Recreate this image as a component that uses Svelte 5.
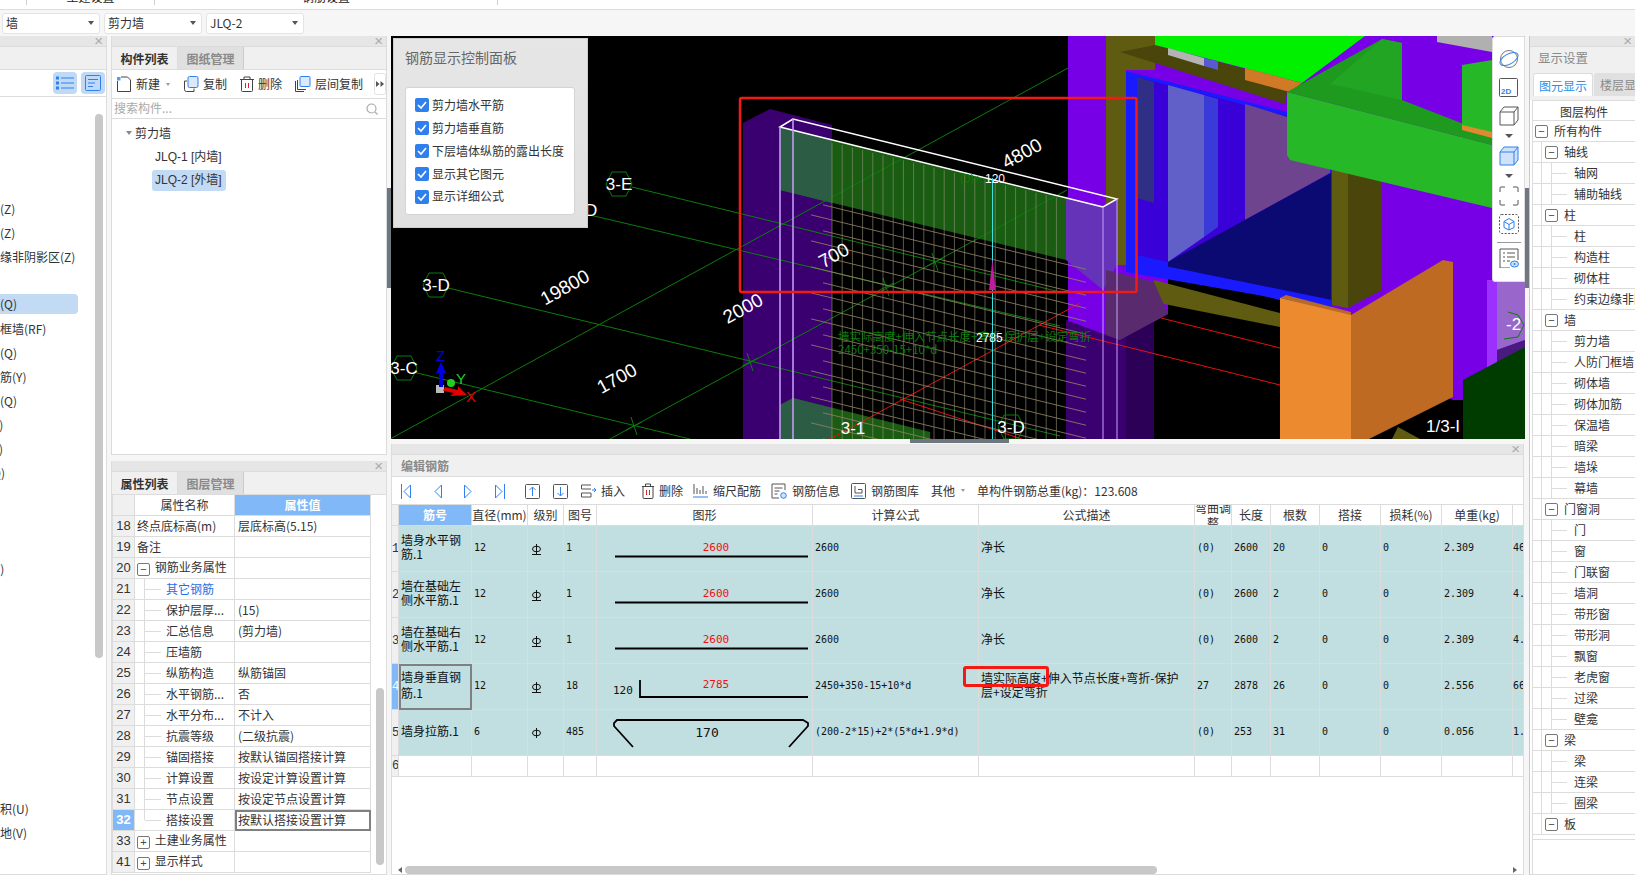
<script>
  const leftRows = ['构造柱(Z)', '砌体柱(Z)', '约束边缘非阴影区(Z)', '', '剪力墙(Q)', '人防门框墙(RF)', '砌体墙(Q)', '砌体加筋(Y)', '保温墙(Q)', '暗梁(A)', '墙垛(E)', '幕墙(Q)', '', '', '', '墙洞(D)', '壁龛(I)', '', '', '', '', '', '', '', '', '建筑面积(U)', '平整场地(V)'];

  const props = [
    { no: 18, name: '终点底标高(m)', value: '层底标高(5.15)' },
    { no: 19, name: '备注', value: '' },
    { no: 20, name: '钢筋业务属性', value: '', box: '-' },
    { no: 21, name: '其它钢筋', value: '', child: true, link: true },
    { no: 22, name: '保护层厚...', value: '(15)', child: true },
    { no: 23, name: '汇总信息', value: '(剪力墙)', child: true },
    { no: 24, name: '压墙筋', value: '', child: true },
    { no: 25, name: '纵筋构造', value: '纵筋锚固', child: true },
    { no: 26, name: '水平钢筋...', value: '否', child: true },
    { no: 27, name: '水平分布...', value: '不计入', child: true },
    { no: 28, name: '抗震等级', value: '(二级抗震)', child: true },
    { no: 29, name: '锚固搭接', value: '按默认锚固搭接计算', child: true },
    { no: 30, name: '计算设置', value: '按设定计算设置计算', child: true },
    { no: 31, name: '节点设置', value: '按设定节点设置计算', child: true },
    { no: 32, name: '搭接设置', value: '按默认搭接设置计算', child: true, last: true, active: true },
    { no: 33, name: '土建业务属性', value: '', box: '+' },
    { no: 41, name: '显示样式', value: '', box: '+' }
  ];

  const checks = ['剪力墙水平筋', '剪力墙垂直筋', '下层墙体纵筋的露出长度', '显示其它图元', '显示详细公式'];

  // rebar rows, fig: 1 straight, 18 hooked, 485 tie
  const rebars = [
    { no: 1, name: '墙身水平钢筋.1', dia: 12, grade: 'b', code: 1, fig: 'line', len: 2600, formula: '2600', desc: '净长', adj: '(0)', total: 2600, count: 20, unit: '2.309', last: '46' },
    { no: 2, name: '墙在基础左侧水平筋.1', dia: 12, grade: 'b', code: 1, fig: 'line', len: 2600, formula: '2600', desc: '净长', adj: '(0)', total: 2600, count: 2, unit: '2.309', last: '4.' },
    { no: 3, name: '墙在基础右侧水平筋.1', dia: 12, grade: 'b', code: 1, fig: 'line', len: 2600, formula: '2600', desc: '净长', adj: '(0)', total: 2600, count: 2, unit: '2.309', last: '4.' },
    { no: 4, name: '墙身垂直钢筋.1', dia: 12, grade: 'b', code: 18, fig: 'hook', len: 2785, formula: '2450+350-15+10*d', desc: '墙实际高度+伸入节点长度+弯折-保护层+设定弯折', adj: '27', total: 2878, count: 26, unit: '2.556', last: '66', active: true },
    { no: 5, name: '墙身拉筋.1', dia: 6, grade: 'a', code: 485, fig: 'tie', len: 170, formula: '(200-2*15)+2*(5*d+1.9*d)', desc: '', adj: '(0)', total: 253, count: 31, unit: '0.056', last: '1.' }
  ];

  const layerTree = [
    ['所有构件', 0], ['轴线', 1], ['轴网', 2], ['辅助轴线', 2], ['柱', 1], ['柱', 2], ['构造柱', 2], ['砌体柱', 2], ['约束边缘非阴影区', 2],
    ['墙', 1], ['剪力墙', 2], ['人防门框墙', 2], ['砌体墙', 2], ['砌体加筋', 2], ['保温墙', 2], ['暗梁', 2], ['墙垛', 2], ['幕墙', 2],
    ['门窗洞', 1], ['门', 2], ['窗', 2], ['门联窗', 2], ['墙洞', 2], ['带形窗', 2], ['带形洞', 2], ['飘窗', 2], ['老虎窗', 2], ['过梁', 2], ['壁龛', 2],
    ['梁', 1], ['梁', 2], ['连梁', 2], ['圈梁', 2], ['板', 1]
  ];

  // 3D scene, painted back to front (page coordinates)
  const solids = [
    ['1068,36 1525,36 1525,400 1453,400 1280,300 1168,262 1168,314 1120,340 1068,340', '#7800e6'],
    ['1066,320 1120,340 1154,322 1154,439 1066,439', '#3a0070'],
    ['1126,332 1154,322 1154,439 1126,439', '#2c0056'],
    ['1106,36 1126,36 1126,265 1106,265', '#5f5c12'],
    ['1126,36 1155,36 1155,70 1126,70', '#5f5c12'],
    ['1120,52 1155,45 1305,85 1287,92 1285,104', '#4a450a'],
    ['1155,36 1365,36 1302,83 1155,45', '#00f000'],
    ['1168,48 1204,58 1204,66 1168,55', '#b4b4b4'],
    ['1204,58 1218,61 1218,70 1204,66', '#5a5ad0'],
    ['1245,68 1302,83 1290,92 1245,80', '#d07a28'],
    ['1437,36 1492,36 1492,52 1437,42', '#b0b0b0'],
    ['1126,71 1287,112 1332,160 1332,305 1280,300 1126,263', '#1a1aff'],
    ['1137,77 1287,116 1330,160 1330,300 1137,255', '#3a00d8'],
    ['1137,77 1154,82 1154,203 1137,198', '#2f2f85'],
    ['1168,85 1204,95 1204,237 1168,262', '#6060c8'],
    ['1204,95 1218,99 1218,227 1204,237', '#3a3ad8'],
    ['1245,104 1330,130 1330,173 1245,220', '#6f448f'],
    ['1168,262 1331,173 1331,303 1168,270', '#0a0a72'],
    ['1126,258 1332,300 1332,308 1126,272', '#1a1aff'],
    ['1154,280 1280,313 1280,327 1154,302', '#5f5c12'],
    ['1332,170 1348,172 1348,308 1332,305', '#5f5c12'],
    ['1348,172 1382,180 1382,290 1348,308', '#4a450a'],
    ['1287,92 1382,39 1402,43 1402,100 1492,135 1492,145', '#1e9a1e'],
    ['1382,39 1402,43 1402,100 1330,84', '#22a522'],
    ['1287,92 1492,145 1492,208 1290,160 1287,155', '#27b827'],
    ['1462,65 1492,60 1492,135 1462,128', '#27b827'],
    ['1462,125 1492,132 1492,138 1462,130', '#e08a30'],
    ['1280,298 1286,295 1351,312 1351,316', '#b56a25'],
    ['1280,298 1351,315 1351,439 1280,439', '#ec8a30'],
    ['1351,315 1443,260 1453,262 1453,397 1369,439 1351,439', '#bf6a23'],
    ['1487,280 1497,280 1497,400 1487,404', '#9b30ff'],
    ['1497,280 1525,280 1525,340 1497,350', '#9966cc'],
    ['1497,350 1525,340 1525,385 1497,400', '#4b1a80'],
    ['1463,380 1525,347 1525,439 1463,439', '#003c00'],
    ['1398,427 1420,439 1392,439', '#5f5c12'],
    // shear wall and the column behind it
    ['743,123 770,109 832,125 832,439 743,439', '#3a0070'],
    ['780,127 1066,198 1066,260 780,190', '#1a5c12'],
    ['780,127 832,140 832,203 780,190', '#2d5c45'],
    ['1066,198 1103,207 1117,199 1117,265 1103,290 1066,260', '#6433b8'],
    ['1106,270 1154,282 1168,314 1120,340 1106,335', '#5a2a6e'],
    ['780,405 793,398 930,432 930,439 780,439', '#1a5c12'],
    ['780,405 793,398 832,408 832,439 780,439', '#2d5c45']
  ];

  const greenLines = [
    [632, 187, 1060, 292], [590, 215, 1060, 326], [448, 288, 1060, 436], [413, 372, 690, 439],
    [390, 439, 1068, 68], [610, 439, 1067, 190]
  ];
  const redLines = [
    [900, 399, 1022, 439], [830, 439, 1080, 303], [1039, 325, 1280, 385], [1161, 318, 1280, 348]
  ];
  const ticks = [[634, 426], [750, 362], [886, 287], [935, 262]];
  const dims = [
    ['19800', 568, 293], ['2000', 746, 314], ['1700', 620, 384], ['700', 837, 261], ['4800', 1025, 159]
  ];
  const hexes = [[619, 184, '3-E'], [436, 285, '3-D'], [404, 368, '3-C'], [1011, 427, '3-D']];

  const barH = Array.from({ length: 19 }, (_, i) => {
    const y = 207 + i * 13;
    const x1 = i % 2 ? 811 : 823;
    return { x1, y1: y + 0.245 * (x1 - 832), x2: 1086, y2: y + 0.245 * (1086 - 832) };
  });
  const barV = Array.from({ length: 23 }, (_, i) => 832 + i * 10.2);
</script>

<div class="app">
  <div class="menu">
    <span class="menu-tab first"><span>土建设置</span></span>
    <span class="menu-tab second"><span>钢筋设置</span></span>
  </div>

  <div class="pickers">
    <div class="picker">墙<i></i></div>
    <div class="picker">剪力墙<i></i></div>
    <div class="picker">JLQ-2<i></i></div>
  </div>

  <div class="main">
    <!-- nav panel, mostly scrolled off to the left -->
    <section class="panel nav">
      <div class="bar"><span class="close">×</span></div>
      <div class="nav-blank"></div>
      <div class="nav-tools">
        <button class="view-btn" aria-label="list">
          <svg width="18" height="14" viewBox="0 0 18 14" fill="none" stroke="#2f80ed"><rect x=".5" y="1" width="2" height="2" /><rect x=".5" y="6" width="2" height="2" /><rect x=".5" y="11" width="2" height="2" /><path d="M5 2h13M5 7h13M5 12h13" /></svg>
        </button>
        <button class="view-btn" aria-label="detail">
          <svg width="16" height="16" viewBox="0 0 16 16" fill="none" stroke="#2f80ed"><rect x=".5" y=".5" width="15" height="15" rx="1" /><path d="M3 4.500h10M3 8h7M3 11.500h5" /></svg>
        </button>
      </div>
      <div class="nav-list">
        {#each leftRows as row, i}
          <div class="nav-row" class:picked={i === 4}><span>{row}</span></div>
        {/each}
        <div class="nav-scroll"></div>
      </div>
    </section>

    <div class="mid">
      <section class="panel upper">
        <div class="bar"><span class="close">×</span></div>
        <div class="tabs">
          <span class="tab on">构件列表</span>
          <span class="tab">图纸管理</span>
        </div>
        <div class="tools list-tools">
          <span class="tool">
            <svg width="16" height="16" viewBox="0 0 16 16" fill="none" stroke="#444"><path d="M1.500 5v10.500h13V4l-3-3H5" /><rect x="1" y="1" width="3.500" height="3.500" fill="#5b9bea" stroke="none" /></svg>
            新建<i class="caret"></i>
          </span>
          <span class="tool">
            <svg width="16" height="16" viewBox="0 0 16 16" fill="none"><path d="M4 5H1.500v8.500a2 2 0 0 0 2 2H11v-3" stroke="#444" /><rect x="5" y=".5" width="10" height="11" rx="1.500" fill="#dbe9fb" stroke="#2f80ed" /></svg>
            复制
          </span>
          <span class="tool">
            <svg width="14" height="16" viewBox="0 0 14 16" fill="none" stroke="#444"><path d="M0 3.500h14M4 3.500V1h6v2.500M1.500 3.500v11a1 1 0 0 0 1 1h9a1 1 0 0 0 1-1v-11" /><path d="M5.500 7v5M8.500 7v5" stroke="#e02020" /></svg>
            删除
          </span>
          <span class="tool">
            <svg width="16" height="16" viewBox="0 0 16 16" fill="none"><path d="M.5 5v10.500H9M2.500 4v9.500H11" stroke="#444" /><rect x="5" y=".5" width="10" height="10" rx="1" fill="#dbe9fb" stroke="#2f80ed" /></svg>
            层间复制
          </span>
          <span class="more">
            <svg width="8" height="6" viewBox="0 0 8 6" fill="#555"><path d="M0 0l3.500 3L0 6zM4.500 0L8 3 4.500 6z" /></svg>
          </span>
        </div>
        <div class="search">
          <span>搜索构件...</span>
          <svg width="12" height="12" viewBox="0 0 12 12" fill="none" stroke="#aaa" stroke-width="1.200"><circle cx="5.500" cy="5.500" r="4.500" /><path d="M9 9l2.500 2.500" /></svg>
        </div>
        <div class="tree">
          <div class="tree-root"><i></i>剪力墙</div>
          <div class="tree-leaf">JLQ-1 [内墙]</div>
          <div class="tree-leaf picked">JLQ-2 [外墙]</div>
        </div>
      </section>

      <section class="panel lower-left">
        <div class="bar"><span class="close">×</span></div>
        <div class="tabs">
          <span class="tab on">属性列表</span>
          <span class="tab">图层管理</span>
        </div>
        <div class="prop-wrap">
          <table class="props">
            <colgroup><col style="width:22px" /><col style="width:100px" /><col style="width:136px" /></colgroup>
            <thead>
              <tr><th class="no"></th><th>属性名称</th><th class="hot">属性值</th></tr>
            </thead>
            <tbody>
              {#each props as p}
                <tr>
                  <td class="no" class:hot={p.active}>{p.no}</td>
                  <td class="pname" class:child={p.child}>
                    {#if p.child}
                      <i class="elbow" class:end={p.last}></i>
                    {/if}
                    {#if p.box}
                      <span class="box">{p.box === '-' ? '−' : '+'}</span>
                    {/if}
                    <span class:link={p.link}>{p.name}</span>
                  </td>
                  <td class="pval" class:active={p.active}>{p.value}</td>
                </tr>
              {/each}
            </tbody>
          </table>
          <div class="prop-scroll"></div>
        </div>
      </section>
    </div>

    <div class="gutter"><i></i></div>

    <div class="center">
      <div class="viewport">
        <svg class="scene" width="1134" height="403" viewBox="391 36 1134 403">
          {#each solids as s}
            <polygon points={s[0]} fill={s[1]} />
          {/each}

          {#each greenLines as l}
            <line x1={l[0]} y1={l[1]} x2={l[2]} y2={l[3]} stroke="#0b7d0b" />
          {/each}
          {#each ticks as t}
            <path d="M{t[0] - 3} {t[1] - 9}L{t[0] + 3} {t[1] + 9}M{t[0] - 8} {t[1] + 4}L{t[0] + 8} {t[1] - 4}" stroke="#0b7d0b" fill="none" />
          {/each}
          {#each redLines as l}
            <line x1={l[0]} y1={l[1]} x2={l[2]} y2={l[3]} stroke="#e80f0f" />
          {/each}

          {#each barV as x}
            <line x1={x} y1={130 + 0.245 * (x - 780)} x2={x} y2="439" stroke="#94947c" stroke-opacity=".6" />
          {/each}
          {#each barH as b}
            <line x1={b.x1} y1={b.y1} x2={b.x2} y2={b.y2} stroke="#8f8060" stroke-opacity=".85" />
          {/each}

          <path d="M780 127L793 119L1117 199L1103 207ZM780 127L1103 207" fill="none" stroke="#fff" stroke-width="1.500" />
          <path d="M780 127V439M793 119V439" stroke="#c9a0ff" stroke-width="1.500" fill="none" />
          <path d="M1103 207V439M1117 199V439" stroke="#c9a0ff" fill="none" />
          <line x1="992.500" y1="178" x2="992.500" y2="439" stroke="#3fe0e0" />
          <polygon points="992.500,259 989,290 995.500,290" fill="#c01ca0" />

          <!-- grid bubbles -->
          {#each hexes as h}
            <polygon points="{h[0] - 13},{h[1]} {h[0] - 7},{h[1] - 12} {h[0] + 7},{h[1] - 12} {h[0] + 13},{h[1]} {h[0] + 7},{h[1] + 12} {h[0] - 7},{h[1] + 12}" fill="none" stroke="#0b7d0b" />
            <text class="label" x={h[0]} y={h[1] + 6} text-anchor="middle">{h[2]}</text>
          {/each}
          <text class="label" x="585" y="216">D</text>
          <text class="label" x="853" y="434" text-anchor="middle">3-1</text>
          <text class="label" x="1426" y="432">1/3-I</text>
          <text class="label" x="1506" y="330">-2</text>
          <path d="M1508 312l10 3 6 10-6 12-14 2" fill="none" stroke="#0b7d0b" />

          {#each dims as d}
            <text class="dim" x={d[1]} y={d[2]} text-anchor="middle" transform="rotate(-29 {d[1]} {d[2]})">{d[0]}</text>
          {/each}

          <text class="green" x="838" y="341">墙实际高度+伸入节点长度+弯折-保护层+设定弯折</text>
          <text class="green" x="838" y="354">2450+350-15+10*d</text>
          <text class="small" x="976" y="342">2785</text>
          <text class="green" x="960" y="183">(0)+</text>
          <text class="small" x="985" y="183">120</text>

          <!-- axis gizmo -->
          <rect x="436" y="385" width="8" height="8" fill="#bbb" />
          <path d="M441 387V372" stroke="#0000e0" stroke-width="4" />
          <polygon points="441,362 436,373 446,373" fill="#0000e0" />
          <polygon points="445,387 458,390 458,386 467,395 450,396 454,393 443,391" fill="#e00000" />
          <circle cx="451" cy="383" r="4" fill="#22d022" />
          <text class="axis" x="436" y="361" fill="#0000e0">Z</text>
          <text class="axis" x="456" y="384" fill="#22d022">Y</text>
          <text class="axis" x="466" y="402" fill="#e00000">X</text>

          <rect x="740" y="98" width="396.500" height="194" rx="1.500" fill="none" stroke="#f41a14" stroke-width="2.500" />
        </svg>

        <div class="rebar-panel">
          <h4>钢筋显示控制面板</h4>
          <div class="rebar-checks">
            {#each checks as label}
              <label>
                <svg width="14" height="14" viewBox="0 0 14 14"><rect width="14" height="14" rx="2" fill="#2f80ed" /><path d="M3 7l3 3 5-6" fill="none" stroke="#fff" stroke-width="1.600" /></svg>
                {label}
              </label>
            {/each}
          </div>
        </div>

        <div class="view-tools">
          <svg width="20" height="20" viewBox="0 0 20 20" fill="none"><circle cx="10" cy="10" r="8.500" stroke="#777" /><ellipse cx="10" cy="10" rx="10" ry="5" transform="rotate(-30 10 10)" stroke="#2f80ed" /></svg>
          <svg class="two-d-box" width="19" height="19" viewBox="0 0 19 19" fill="none"><rect x=".5" y=".5" width="18" height="18" rx="1" stroke="#555" /><text x="2" y="16" class="two-d">2D</text></svg>
          <svg width="20" height="20" viewBox="0 0 20 20" fill="none" stroke="#555"><path d="M1 6l4-5h14v13l-4 5H1zM1 6h14v13M15 6l4-5" /></svg>
          <i class="tool-caret"></i>
          <svg width="20" height="20" viewBox="0 0 20 20" stroke="#2f80ed"><path d="M1 6l4-5h14v13l-4 5H1z" fill="#cfe2fa" /><path d="M1 6h14v13M15 6l4-5" fill="none" /></svg>
          <i class="tool-caret"></i>
          <svg width="20" height="20" viewBox="0 0 20 20" fill="none" stroke="#555"><path d="M1 6V2a1 1 0 0 1 1-1h4M14 1h4a1 1 0 0 1 1 1v4M19 14v4a1 1 0 0 1-1 1h-4M6 19H2a1 1 0 0 1-1-1v-4" /></svg>
          <svg width="20" height="20" viewBox="0 0 20 20" fill="none"><rect x=".5" y=".5" width="19" height="19" rx="2" stroke="#555" stroke-dasharray="2 1.500" /><path d="M10 4.500l5 3v6l-5 2.500-5-2.500v-6zM5 7.500l5 3 5-3M10 10.500V16" stroke="#2f80ed" /></svg>
          <div class="tool-line"></div>
          <svg width="20" height="20" viewBox="0 0 20 20" fill="none"><path d="M19 12V1H1v19h10" stroke="#555" /><path d="M4 5h2M8 5h8M4 9h2M8 9h8M4 13h2M8 13h3" stroke="#555" /><ellipse cx="15.500" cy="16" rx="4" ry="3" fill="#cfe2fa" stroke="#2f80ed" /><circle cx="15.500" cy="16" r="1" fill="#2f80ed" /></svg>
        </div>
      </div>

      <div class="hgutter"><i></i></div>

      <section class="panel editor">
        <div class="bar"><span class="close">×</span></div>
        <div class="editor-title">编辑钢筋</div>
        <div class="tools editor-tools">
          <span class="nav-btns">
            <svg width="10" height="15" viewBox="0 0 10 15" fill="none" stroke="#2f80ed"><path d="M.5 0v15M9.500 1L3 7.500 9.500 14z" /></svg>
            <svg width="8" height="15" viewBox="0 0 8 15" fill="none" stroke="#2f80ed"><path d="M7.500 1L1 7.500 7.500 14z" /></svg>
            <svg width="8" height="15" viewBox="0 0 8 15" fill="none" stroke="#2f80ed"><path d="M.5 1L7 7.500.5 14z" /></svg>
            <svg width="10" height="15" viewBox="0 0 10 15" fill="none" stroke="#2f80ed"><path d="M9.500 0v15M.5 1L7 7.500.5 14z" /></svg>
          </span>
          <span class="move-btns">
            <svg width="15" height="15" viewBox="0 0 15 15" fill="none"><rect x=".5" y=".5" width="14" height="14" rx="1" stroke="#555" /><path d="M7.500 12V3.500M4.500 6l3-3 3 3" stroke="#2f80ed" /></svg>
            <svg width="15" height="15" viewBox="0 0 15 15" fill="none"><rect x=".5" y=".5" width="14" height="14" rx="1" stroke="#555" /><path d="M7.500 3v8.500M4.500 9l3 3 3-3" stroke="#2f80ed" /></svg>
          </span>
          <span class="tool">
            <svg width="15" height="14" viewBox="0 0 15 14" fill="none"><path d="M10 1H.5v4H10M.5 9h9.500v4H.5z" stroke="#555" /><path d="M11 6h3.500M13 4l2 2-2 2" stroke="#2f80ed" /></svg>
            插入
          </span>
          <span class="tool">
            <svg width="12" height="16" viewBox="0 0 12 16" fill="none" stroke="#444"><path d="M0 3.500h12M3.500 3.500V1h5v2.500M1 3.500v11a1 1 0 0 0 1 1h8a1 1 0 0 0 1-1v-11" /><path d="M4.500 7v5M7.500 7v5" stroke="#e02020" /></svg>
            删除
          </span>
          <span class="tool">
            <svg width="15" height="16" viewBox="0 0 15 16" fill="none"><path d="M1 1v10M4 5v6M7 7v4M10 3v8M13 8v3" stroke="#555" /><path d="M0 14h15" stroke="#2f80ed" /></svg>
            缩尺配筋
          </span>
          <span class="tool">
            <svg width="16" height="16" viewBox="0 0 16 16" fill="none"><path d="M14 7V1H1v14h7" stroke="#555" /><path d="M3.500 5h8M3.500 8h5M3.500 11h3" stroke="#555" /><circle cx="12.500" cy="12.500" r="2.800" fill="#cfe2fa" stroke="#2f80ed" /></svg>
            钢筋信息
          </span>
          <span class="tool">
            <svg width="15" height="16" viewBox="0 0 15 16" fill="none" stroke="#555"><rect x=".5" y=".5" width="14" height="15" rx="1" /><path d="M4 3v7h7V6.500H7" /><path d="M3 13h9" stroke="#2f80ed" /></svg>
            钢筋图库
          </span>
          <span class="tool">其他<i class="caret"></i></span>
          <span class="total">单构件钢筋总重(kg)：123.608</span>
        </div>

        <div class="grid-wrap">
          <table class="rebars">
            <colgroup>
              <col style="width:7px" /><col style="width:73px" /><col style="width:56px" /><col style="width:36px" /><col style="width:33px" />
              <col style="width:216px" /><col style="width:166px" /><col style="width:216px" /><col style="width:37px" /><col style="width:39px" />
              <col style="width:49px" /><col style="width:61px" /><col style="width:61px" /><col style="width:71px" /><col style="width:12px" />
            </colgroup>
            <thead>
              <tr>
                <th class="idx"></th><th class="hot">筋号</th><th>直径(mm)</th><th>级别</th><th>图号</th><th>图形</th><th>计算公式</th><th>公式描述</th>
                <th><div class="clip">弯曲调整</div></th><th>长度</th><th>根数</th><th>搭接</th><th>损耗(%)</th><th>单重(kg)</th><th></th>
              </tr>
            </thead>
            <tbody>
              {#each rebars as r}
                <tr class="filled">
                  <td class="idx" class:hot={r.active}>{r.no}</td>
                  <td class="rname" class:active={r.active}>{r.name}</td>
                  <td class="num">{r.dia}</td>
                  <td class="grade">
                    <svg width="11" height="11" viewBox="0 0 11 11" fill="none" stroke="#111"><ellipse cx="5.500" cy="5" rx="4" ry="2.800" /><path d="M5.500 0v10" />{#if r.grade === 'b'}<path d="M1 10.500h9" />{/if}</svg>
                  </td>
                  <td class="num">{r.code}</td>
                  <td class="fig">
                    <svg width="216" height="45" viewBox="0 0 216 45">
                      {#if r.fig === 'line'}
                        <line x1="18" y1="30.500" x2="211" y2="30.500" stroke="#000" stroke-width="2" />
                        <text class="fig-red" x="119" y="25" text-anchor="middle">{r.len}</text>
                      {:else if r.fig === 'hook'}
                        <path d="M43 16V33H211" fill="none" stroke="#000" stroke-width="1.800" />
                        <text class="fig-black" x="16" y="30">120</text>
                        <text class="fig-red" x="119" y="24" text-anchor="middle">{r.len}</text>
                      {:else}
                        <path d="M36 37L17 16V13L20 10H206L211 13V16L192 37" fill="none" stroke="#000" stroke-width="1.800" />
                        <text class="fig-black big" x="110" y="27" text-anchor="middle">{r.len}</text>
                      {/if}
                    </svg>
                  </td>
                  <td class="num">{r.formula}</td>
                  <td class="desc">
                    {r.desc}
                    {#if r.active}<span class="callout"></span>{/if}
                  </td>
                  <td class="num">{r.adj}</td>
                  <td class="num">{r.total}</td>
                  <td class="num">{r.count}</td>
                  <td class="num">0</td>
                  <td class="num">0</td>
                  <td class="num">{r.unit}</td>
                  <td class="num edge">{r.last}</td>
                </tr>
              {/each}
              <tr class="blank">
                <td class="idx">6</td><td></td><td></td><td></td><td></td><td></td><td></td><td></td><td></td><td></td><td></td><td></td><td></td><td></td><td></td>
              </tr>
            </tbody>
          </table>
          <div class="hscroll">
            <i class="arrow left"></i>
            <div class="thumb"></div>
            <i class="arrow right"></i>
          </div>
        </div>
      </section>
    </div>

    <div class="gutter"><i></i></div>

    <section class="panel layers">
      <div class="bar"><span class="close">×</span></div>
      <div class="layers-title">显示设置</div>
      <div class="layers-tabs">
        <span class="ltab on">图元显示</span>
        <span class="ltab">楼层显示</span>
      </div>
      <div class="layer-table">
        <div class="layer-head">图层构件</div>
        {#each layerTree as [name, level]}
          <div class="layer-row lv{level}">
            {#if level > 0}<i class="rail r1"></i>{/if}
            {#if level === 2}<i class="rail r2"></i><i class="dash"></i>{/if}
            {#if level < 2}<span class="box">−</span>{/if}
            <span class="layer-name">{name}</span>
          </div>
        {/each}
        <div class="layer-end"></div>
      </div>
    </section>
  </div>
</div>

<style>
  :global(body) {
    margin: 0;
    overflow: hidden;
  }

  .app {
    width: 1635px;
    height: 875px;
    overflow: hidden;
    background: #f6f6f6;
    color: #333;
    font: 12px/1.2 "Noto Sans CJK SC", "Liberation Sans", sans-serif;
  }

  .menu {
    height: 9px;
    padding-left: 26px;
    display: flex;
    overflow: hidden;
    background: #fff;
    border-bottom: 1px solid #dcdcdc;
  }

  .menu-tab {
    display: flex;
    justify-content: center;
    height: 5px;
    border-left: 1px solid #d0d0d0;
    color: #222;
  }

  .menu-tab span {
    margin-top: -12px;
    line-height: 18px;
    height: 15px;
    overflow: hidden;
  }

  .menu-tab.first { width: 127px; }
  .menu-tab.second { width: 342px; border-right: 1px solid #d0d0d0; }

  .pickers {
    height: 26px;
    padding-left: 2px;
    display: flex;
    align-items: center;
    gap: 4px;
    box-sizing: border-box;
  }

  .picker {
    width: 98px;
    height: 21px;
    padding-left: 3px;
    box-sizing: border-box;
    display: flex;
    align-items: center;
    justify-content: space-between;
    background: #fff;
    border: 1px solid #e4e4e4;
    border-radius: 3px;
  }

  .picker i {
    margin-right: 5px;
    border: 3px solid transparent;
    border-top: 4px solid #555;
    border-bottom: 0;
  }

  .main {
    height: 839px;
    display: grid;
    grid-template-columns: 107px 4px 276px 4px 1134px 4px 106px;
  }

  .mid { grid-column: 3; display: flex; flex-direction: column; gap: 6px; }
  .center { display: flex; flex-direction: column; }

  .panel {
    background: #fff;
    box-sizing: border-box;
    border: 1px solid #dcdcdc;
    border-top: 0;
    overflow: hidden;
    display: flex;
    flex-direction: column;
    min-height: 0;
  }

  .bar {
    flex: none;
    height: 10px;
    background: #e6e6e6;
    border-bottom: 1px solid #dcdcdc;
    position: relative;
  }

  .close {
    position: absolute;
    right: 3px;
    top: -4px;
    color: #aaa;
    font: 15px/18px "Liberation Sans", sans-serif;
  }

  /* left nav */
  .nav { border-left: 0; }
  .nav-blank { height: 22px; background: #f0f0f0; border-bottom: 1px solid #dcdcdc; flex: none; }

  .nav-tools {
    height: 26px;
    flex: none;
    display: flex;
    justify-content: flex-end;
    align-items: center;
    gap: 4px;
    padding-right: 1px;
    border-bottom: 1px solid #dcdcdc;
  }

  .view-btn {
    width: 24px;
    height: 22px;
    padding: 0;
    border: 0;
    border-radius: 4px;
    background: #bfd9f6;
    display: flex;
    align-items: center;
    justify-content: center;
  }

  .nav-list {
    flex: 1;
    position: relative;
    padding-top: 100px;
  }

  .nav-row {
    height: 24px;
    display: flex;
    align-items: center;
    white-space: nowrap;
  }

  .nav-row span { margin-left: -36px; }

  .nav-row.picked {
    width: 78px;
    height: 20px;
    margin: 1px 0 3px;
    background: #c2daf3;
    border-radius: 0 4px 4px 0;
  }

  .nav-scroll {
    position: absolute;
    top: 17px;
    left: 95px;
    width: 8px;
    height: 544px;
    background: #c8c8c8;
    border-radius: 4px;
  }

  /* component list */
  .upper { height: 419px; flex: none; }
  .lower-left { flex: 1; }

  .tabs {
    flex: none;
    height: 23px;
    display: flex;
    background: #f0f0f0;
    border-bottom: 1px solid #dcdcdc;
    box-sizing: border-box;
  }

  .tab {
    width: 65px;
    text-align: center;
    line-height: 23px;
    color: #8a8a8a;
    font-weight: 700;
    background: #e0e0e0;
    border-right: 1px solid #ccc;
  }

  .tab.on {
    color: #333;
    background: #f0f0f0;
    border-right: 1px solid #dcdcdc;
  }

  .tools {
    flex: none;
    display: flex;
    align-items: center;
    border-bottom: 1px solid #dcdcdc;
    white-space: nowrap;
  }

  .tool {
    display: inline-flex;
    align-items: center;
    gap: 5px;
  }

  .list-tools {
    height: 28px;
    padding-left: 4px;
    gap: 13px;
  }

  .list-tools .tool { gap: 4px; }

  .caret {
    width: 0;
    margin-left: 2px;
    border: 2.500px solid transparent;
    border-top: 3px solid #999;
    border-bottom: 0;
  }

  .more {
    height: 20px;
    width: 10px;
    margin-left: -2px;
    display: flex;
    align-items: center;
    justify-content: center;
    border: 1px solid #e4e4e4;
    border-radius: 2px;
  }

  .search {
    flex: none;
    height: 19px;
    padding: 0 8px 0 2px;
    display: flex;
    align-items: center;
    justify-content: space-between;
    color: #aaa;
    border-bottom: 1px solid #dcdcdc;
  }

  .tree { flex: 1; padding-top: 2px; }

  .tree-root {
    height: 24px;
    padding-left: 14px;
    display: flex;
    align-items: center;
    gap: 3px;
  }

  .tree-root i {
    border: 3.500px solid transparent;
    border-top: 4px solid #888;
    border-bottom: 0;
  }

  .tree-leaf {
    width: fit-content;
    height: 21px;
    margin: 2px 0 0 40px;
    padding: 0 4px 0 3px;
    line-height: 21px;
    font-family: "Liberation Sans", "Noto Sans CJK SC", sans-serif;
    border-radius: 3px;
  }

  .tree-leaf.picked { background: #c2daf3; }

  /* property table */
  .prop-wrap { flex: 1; position: relative; }

  .props {
    width: 258px;
    table-layout: fixed;
    border-collapse: collapse;
  }

  .props th {
    height: 20px;
    padding: 0;
    font-weight: 400;
    border: 1px solid #dcdcdc;
    border-top: 0;
  }

  .props td {
    height: 20px;
    padding: 0 3px;
    box-sizing: content-box;
    border: 1px solid #dcdcdc;
    white-space: nowrap;
    overflow: hidden;
  }

  .props .no {
    padding: 0;
    text-align: center;
    background: #f0f0f0;
    font-family: "Liberation Sans", sans-serif;
    font-size: 13px;
  }

  .props .hot, .rebars .hot {
    background: #80b8f8;
    color: #fff;
    font-weight: 700;
  }

  .props td.pname {
    position: relative;
    padding-left: 2px;
  }

  .props td.pname.child { padding-left: 31px; }

  .link { color: #1f6fe5; }

  .box {
    display: inline-block;
    width: 11px;
    height: 11px;
    margin-right: 2px;
    border: 1px solid #777;
    border-radius: 2px;
    text-align: center;
    vertical-align: -1px;
    background: #fff;
    font: 11px/10px "Liberation Sans", sans-serif;
    color: #444;
  }

  .elbow {
    position: absolute;
    left: 9px;
    top: -1px;
    bottom: -1px;
    width: 16px;
    border-left: 1px solid #dcdcdc;
  }

  .elbow::after {
    content: "";
    position: absolute;
    left: 0;
    right: 0;
    top: 11px;
    border-top: 1px solid #dcdcdc;
  }

  .elbow.end { bottom: 10px; }

  .pval.active {
    outline: 2px solid #808080;
    outline-offset: -2px;
  }

  .prop-scroll {
    position: absolute;
    left: 264px;
    top: 193px;
    width: 8px;
    height: 177px;
    background: #c8c8c8;
    border-radius: 4px;
  }

  /* splitter handles */
  .gutter { position: relative; }

  .gutter i {
    position: absolute;
    left: 0;
    top: 152px;
    width: 4px;
    height: 100px;
    background: #6e7680;
  }

  .hgutter {
    height: 5px;
    flex: none;
    position: relative;
  }

  .hgutter i {
    position: absolute;
    left: 519px;
    top: 0;
    width: 99px;
    height: 4px;
    background: #6e7680;
  }

  /* 3D view */
  .viewport {
    flex: none;
    width: 1134px;
    height: 403px;
    position: relative;
    overflow: hidden;
    background: #000;
  }

  .scene { display: block; }

  .label { fill: #fff; font: 17px "Liberation Sans", sans-serif; }
  .dim { fill: #fff; font: 19px "Liberation Sans", sans-serif; }
  .green { fill: #0b7d0b; font: 11.500px "Noto Sans CJK SC", sans-serif; }
  .small { fill: #fff; font: 12px "Liberation Sans", sans-serif; }
  .axis { font: 15px "Liberation Sans", sans-serif; }

  .rebar-panel {
    position: absolute;
    left: 2px;
    top: 2px;
    width: 195px;
    height: 190px;
    box-sizing: border-box;
    padding: 10px 12px 0 11px;
    background: linear-gradient(#e6e6e6, #e0e0e0);
    border: 1px solid #ccc;
  }

  .rebar-panel h4 {
    margin: 0 0 22px;
    font-size: 14px;
    font-weight: 400;
    line-height: 16px;
    color: #666;
  }

  .rebar-checks {
    height: 128px;
    box-sizing: border-box;
    padding: 6px 0 0 9px;
    background: #fff;
    border: 1px solid #d4d4d4;
    border-radius: 3px;
  }

  .rebar-checks label {
    height: 22.800px;
    display: flex;
    align-items: center;
    gap: 3px;
    white-space: nowrap;
  }

  .view-tools {
    position: absolute;
    right: 0;
    top: 0;
    width: 33px;
    height: 246px;
    box-sizing: border-box;
    padding-top: 12px;
    display: flex;
    flex-direction: column;
    align-items: center;
    gap: 8px;
    background: #fff;
    border: 1px solid #ddd;
    border-radius: 3px 0 0 3px;
  }

  .two-d-box { margin: 1px 0; }
  .two-d { font: 700 8px "Liberation Sans", sans-serif; fill: #2f80ed; }

  .tool-caret {
    border: 4px solid transparent;
    border-top: 4px solid #555;
    border-bottom: 0;
  }

  .tool-line { width: 24px; border-top: 1px solid #999; margin-bottom: -3px; }

  /* rebar editor */
  .editor { flex: 1; width: 1133px; }

  .editor-title {
    flex: none;
    height: 21px;
    padding-left: 9px;
    line-height: 21px;
    background: #f0f0f0;
    border-bottom: 1px solid #dcdcdc;
    color: #8a8a8a;
    font-weight: 700;
  }

  .editor-tools {
    height: 26px;
    padding: 1px 0 0 9px;
  }

  .nav-btns { width: 124px; display: flex; justify-content: space-between; padding-right: 20px; box-sizing: border-box; }
  .move-btns { width: 56px; display: flex; gap: 13px; }

  .editor-tools .tool:nth-of-type(3) { width: 61px; }
  .editor-tools .tool:nth-of-type(4) { width: 51px; }
  .editor-tools .tool:nth-of-type(5) { width: 78px; }
  .editor-tools .tool:nth-of-type(6) { width: 80px; }
  .editor-tools .tool:nth-of-type(7) { width: 80px; }
  .editor-tools .tool:nth-of-type(8) { width: 46px; gap: 0; }
  .editor-tools .tool:nth-of-type(8) .caret { margin-left: 6px; }

  .grid-wrap { flex: 1; position: relative; overflow: hidden; }

  .rebars {
    width: 1133px;
    margin-left: -1px;
    table-layout: fixed;
    border-collapse: collapse;
  }

  .rebars th {
    height: 20px;
    padding: 0;
    font-weight: 400;
    border: 1px solid #dcdcdc;
    border-top: 0;
    white-space: nowrap;
    overflow: hidden;
  }

  .clip {
    height: 20px;
    display: flex;
    align-items: center;
    justify-content: center;
    overflow: hidden;
    white-space: normal;
    line-height: 15px;
  }

  .rebars td {
    height: 46px;
    box-sizing: border-box;
    padding: 0 2px 3px;
    border: 1px solid #dcdcdc;
    color: #111;
    overflow: hidden;
  }

  .rebars .filled td { background: #c1dee1; }
  .rebars .blank td { height: 21px; background: #fff; }

  .rebars td.idx, .rebars th.idx {
    padding: 0;
    text-align: center;
    font: 12px "Liberation Mono", monospace;
    background: #f0f0f0;
    color: #333;
  }

  .rebars .filled td.idx { background: #f0f0f0; }
  .rebars .filled td.idx.hot { background: #80b8f8; color: #fff; }

  .rname { line-height: 14px; }

  .rebars .filled td.rname.active {
    line-height: 16px;
    outline: 2px solid #808080;
    outline-offset: -2px;
  }

  .num {
    font: 10px "DejaVu Sans Mono", monospace;
    white-space: nowrap;
  }

  .rebars td.edge { padding-left: 0; padding-right: 0; }

  .rebars td.grade { padding: 0; }
  .grade svg { display: block; margin: 2px auto 0 3px; }

  .rebars td.fig { padding: 0; }
  .fig svg { display: block; }

  .fig-red { fill: #f01010; font: 11px "DejaVu Sans Mono", monospace; }
  .fig-black { fill: #111; font: 11px "DejaVu Sans Mono", monospace; }
  .fig-black.big { font-size: 13px; }

  .rebars td.desc {
    position: relative;
    line-height: 14px;
    overflow: visible;
    padding-right: 12px;
  }

  .callout {
    position: absolute;
    left: -16px;
    top: 2px;
    width: 80px;
    height: 15px;
    border: 3px solid #f41a14;
    border-radius: 3px;
  }

  .hscroll {
    position: absolute;
    left: 0;
    right: 0;
    bottom: 0;
    height: 9px;
    padding-left: 6px;
    display: flex;
    align-items: center;
    background: #fff;
  }

  .hscroll .thumb {
    width: 752px;
    height: 8px;
    margin-left: 3px;
    background: #c8c8c8;
    border-radius: 4px;
  }

  .hscroll .arrow {
    border: 3.500px solid transparent;
  }

  .hscroll .arrow.left { border-right: 4px solid #666; border-left: 0; }
  .hscroll .arrow.right { border-left: 4px solid #666; border-right: 0; margin-left: auto; margin-right: 6px; }

  /* display settings */
  .layers {
    border-right: 0;
    border-top: 0;
    border-left: 1px solid #c8c8c8;
  }

  .layers-title {
    flex: none;
    height: 26px;
    padding: 3px 0 0 8px;
    box-sizing: border-box;
    background: #f0f0f0;
    color: #8a8a8a;
    font-size: 12.500px;
  }

  .layers-tabs {
    flex: none;
    height: 27px;
    padding: 0 0 0 3px;
    box-sizing: border-box;
    display: flex;
    gap: 1px;
    background: #f0f0f0;
    white-space: nowrap;
    overflow: hidden;
  }

  .ltab {
    flex: none;
    width: 60px;
    height: 23px;
    line-height: 23px;
    text-align: center;
    color: #8a8a8a;
    background: #e0e0e0;
    border-radius: 3px 3px 0 0;
  }

  .ltab.on {
    color: #2e8fe8;
    background: #fff;
    border: 1px solid #dcdcdc;
    border-bottom: 0;
    box-sizing: border-box;
  }

  .layer-table {
    flex: 1;
    margin-left: 2px;
    border-left: 1px solid #dcdcdc;
  }

  .layer-head {
    height: 21px;
    line-height: 21px;
    text-align: center;
    border-bottom: 1px solid #dcdcdc;
    border-top: 1px solid #dcdcdc;
    box-sizing: border-box;
  }

  .layer-row {
    position: relative;
    height: 21px;
    box-sizing: border-box;
    display: flex;
    align-items: center;
    white-space: nowrap;
    border-bottom: 1px solid #dcdcdc;
    overflow: hidden;
  }

  .layer-row .box { margin-right: 0; position: relative; }

  .lv0 { padding-left: 2px; }
  .lv0 .layer-name { margin-left: 6px; }
  .lv1 { padding-left: 12px; }
  .lv1 .layer-name { margin-left: 6px; }
  .lv2 { padding-left: 41px; }

  .rail {
    position: absolute;
    top: 0;
    bottom: -1px;
    border-left: 1px solid #dcdcdc;
  }

  .r1 { left: 8px; }
  .r2 { left: 18px; }

  .dash {
    position: absolute;
    left: 18px;
    top: 10px;
    width: 16px;
    border-top: 1px solid #dcdcdc;
  }

  .layer-end {
    height: 4px;
    border-bottom: 1px solid #dcdcdc;
  }
</style>
